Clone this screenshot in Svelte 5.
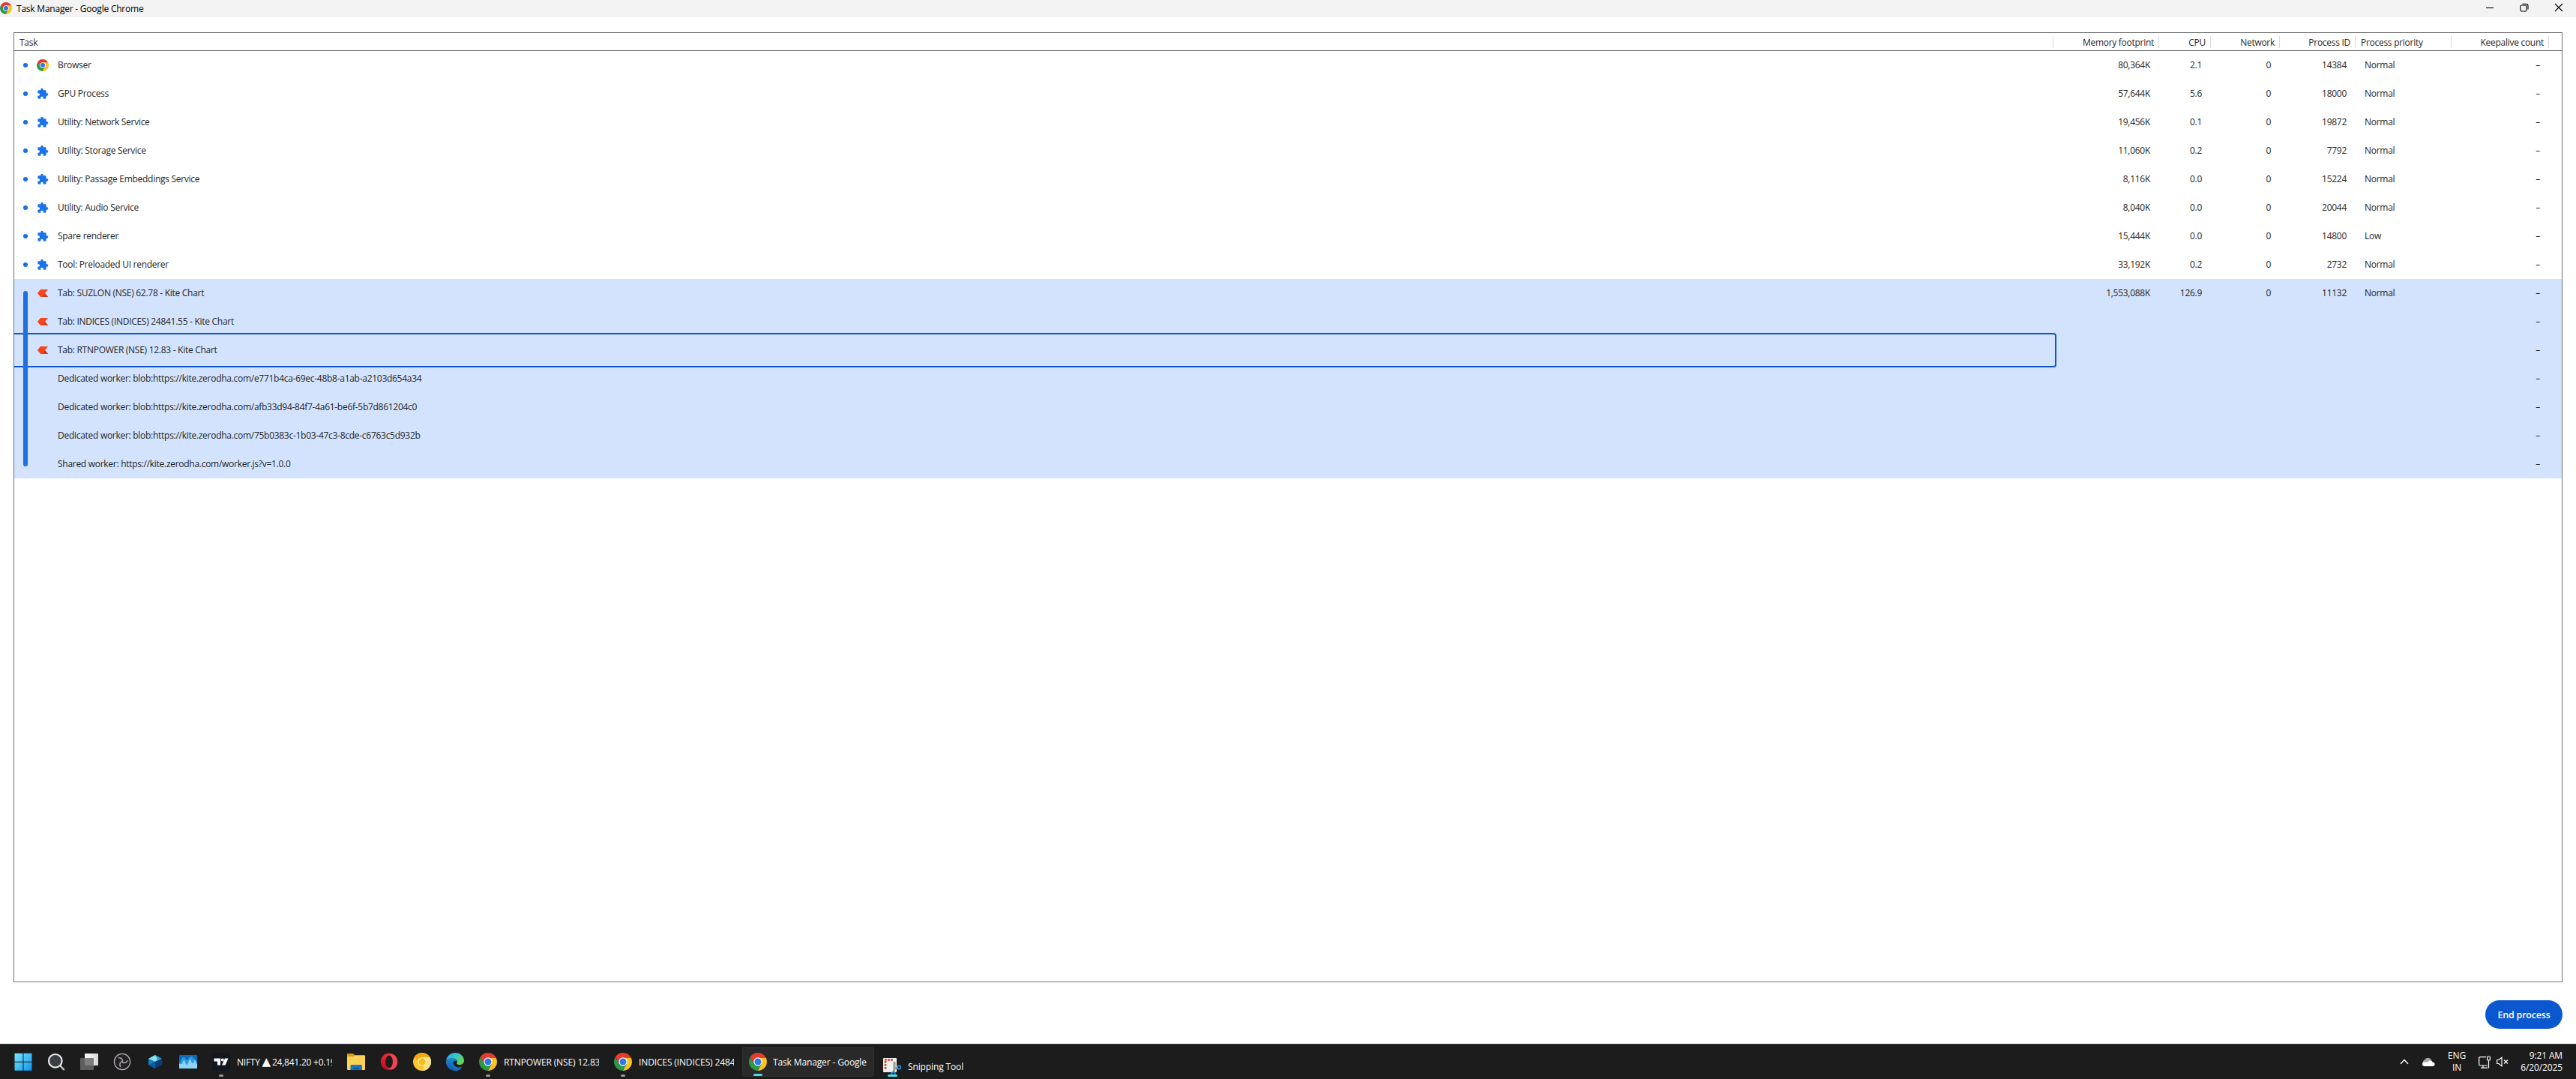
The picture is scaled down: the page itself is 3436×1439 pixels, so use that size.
<script lang="ts">
  type Row = { icon: string; name: string; mem?: string; cpu?: string; net?: string; pid?: string; pri?: string; focused?: boolean };
  const procs: Row[] = [
    { icon: 'chrome', name: 'Browser', mem: '80,364K', cpu: '2.1', net: '0', pid: '14384', pri: 'Normal' },
    { icon: 'ext', name: 'GPU Process', mem: '57,644K', cpu: '5.6', net: '0', pid: '18000', pri: 'Normal' },
    { icon: 'ext', name: 'Utility: Network Service', mem: '19,456K', cpu: '0.1', net: '0', pid: '19872', pri: 'Normal' },
    { icon: 'ext', name: 'Utility: Storage Service', mem: '11,060K', cpu: '0.2', net: '0', pid: '7792', pri: 'Normal' },
    { icon: 'ext', name: 'Utility: Passage Embeddings Service', mem: '8,116K', cpu: '0.0', net: '0', pid: '15224', pri: 'Normal' },
    { icon: 'ext', name: 'Utility: Audio Service', mem: '8,040K', cpu: '0.0', net: '0', pid: '20044', pri: 'Normal' },
    { icon: 'ext', name: 'Spare renderer', mem: '15,444K', cpu: '0.0', net: '0', pid: '14800', pri: 'Low' },
    { icon: 'ext', name: 'Tool: Preloaded UI renderer', mem: '33,192K', cpu: '0.2', net: '0', pid: '2732', pri: 'Normal' },
  ];
  const group: Row[] = [
    { icon: 'kite', name: 'Tab: SUZLON (NSE) 62.78 - Kite Chart', mem: '1,553,088K', cpu: '126.9', net: '0', pid: '11132', pri: 'Normal' },
    { icon: 'kite', name: 'Tab: INDICES (INDICES) 24841.55 - Kite Chart' },
    { icon: 'kite', name: 'Tab: RTNPOWER (NSE) 12.83 - Kite Chart', focused: true },
    { icon: '', name: 'Dedicated worker: blob:https://kite.zerodha.com/e771b4ca-69ec-48b8-a1ab-a2103d654a34' },
    { icon: '', name: 'Dedicated worker: blob:https://kite.zerodha.com/afb33d94-84f7-4a61-be6f-5b7d861204c0' },
    { icon: '', name: 'Dedicated worker: blob:https://kite.zerodha.com/75b0383c-1b03-47c3-8cde-c6763c5d932b' },
    { icon: '', name: 'Shared worker: https://kite.zerodha.com/worker.js?v=1.0.0' },
  ];
</script>

{#snippet chrome()}
  <svg class="fill" viewBox="0 0 48 48">
    <path fill="#fcc31e" d="M24 24 24 13H45.3A24 24 0 0 1 23.5 48L33.6 30z" />
    <path fill="#e33b2e" d="M3.2 12A24 24 0 0 1 45.3 13H24L13.8 30z" />
    <path fill="#2a9a48" d="M3.2 12 14 30 24 35 33.6 30 23.5 48A24 24 0 0 1 3.2 12z" />
    <circle cx="24" cy="24" r="11.5" fill="#fff" />
    <circle cx="24" cy="24" r="9" fill="#3078e8" />
  </svg>
{/snippet}

{#snippet cells(r: Row)}
  <div class="task">
    <div class="ic">
      {#if r.icon === 'chrome'}{@render chrome()}
      {:else if r.icon === 'ext'}
        <svg class="fill" viewBox="0 0 24 24"><path fill="#1a73e8" d="M20.5 11H19V7a2 2 0 0 0-2-2h-4V3.500a2.500 2.500 0 0 0-5 0V5H4a2 2 0 0 0-1.990 2v3.800H3.500a2.700 2.700 0 0 1 0 5.400H2V20a2 2 0 0 0 2 2h3.800v-1.500a2.700 2.700 0 0 1 5.400 0V22H17a2 2 0 0 0 2-2v-4h1.500a2.500 2.500 0 0 0 0-5z" /></svg>
      {:else if r.icon === 'kite'}
        <svg class="fill" viewBox="0 0 16 16"><path fill="#f6461a" d="M5 3H15L11 8 15 13H5L1 8z" /><path fill="#d23b2a" d="M11 8 15 13H7.500z" /></svg>
      {/if}
    </div>
    <span>{r.name}</span>
    {#if r.focused}<div class="focus"></div>{/if}
  </div>
  <div class="num">{r.mem ?? ''}</div>
  <div class="num">{r.cpu ?? ''}</div>
  <div class="num">{r.net ?? ''}</div>
  <div class="num">{r.pid ?? ''}</div>
  <div class="pri">{r.pri ?? ''}</div>
  <div class="num dash">–</div>
{/snippet}

<div class="screen">
  <header class="titlebar">
    <div class="logo">{@render chrome()}</div>
    <h1>Task Manager - Google Chrome</h1>
    <div class="controls">
      <svg viewBox="0 0 12 12"><path d="M1 6.500H11" /></svg>
      <svg viewBox="0 0 12 12"><rect x="1" y="3" width="8" height="8" rx="1.500" /><path d="M3.500 1.200H8.500A2.500 2.500 0 0 1 11 3.700V8.500" /></svg>
      <svg viewBox="0 0 12 12"><path d="M1 1 11 11M11 1 1 11" /></svg>
    </div>
  </header>

  <main>
    <section class="table">
      <div class="grid head">
        <div class="h first">Task</div>
        <div class="h">Memory footprint</div>
        <div class="h">CPU</div>
        <div class="h">Network</div>
        <div class="h">Process ID</div>
        <div class="h left">Process priority</div>
        <div class="h">Keepalive count</div>
      </div>
      {#each procs as r}
        <div class="grid row dot">{@render cells(r)}</div>
      {/each}
      <div class="group">
        {#each group as r}
          <div class="grid row">{@render cells(r)}</div>
        {/each}
        <div class="bar"></div>
      </div>
    </section>
    <div class="actions"><button>End process</button></div>
  </main>

  <footer class="taskbar">
    <div class="apps">
      <div class="app">
        <svg viewBox="0 0 24 24"><defs><linearGradient id="win" x1="0" y1="0" x2="1" y2="1"><stop offset="0" stop-color="#7be6fb" /><stop offset="1" stop-color="#0c96ee" /></linearGradient></defs><path fill="url(#win)" d="M.5 1.500A.8.8 0 0 1 1.300.7H11.500V11.700H.5zM12.500.7H22.700A.8.8 0 0 1 23.500 1.500V11.700H12.500zM.5 12.700H11.500V23.700H1.300A.8.8 0 0 1 .5 22.900zM12.500 12.700H23.500V22.900A.8.8 0 0 1 22.700 23.700H12.500z" /></svg>
      </div>
      <div class="app">
        <svg viewBox="0 0 24 24"><path d="M17 17 22 22.300" stroke="#c9c9c9" stroke-width="2.400" stroke-linecap="round" /><circle cx="10.800" cy="10.800" r="8.800" fill="#3a3f42" stroke="#e9e9e9" stroke-width="2.200" /></svg>
      </div>
      <div class="app">
        <svg viewBox="0 0 24 24"><defs><linearGradient id="tv"><stop stop-color="#fff" /><stop offset="1" stop-color="#d8d8d8" /></linearGradient></defs><rect x="6" y="1" width="18" height="16" rx=".8" fill="url(#tv)" /><rect x="0" y="7" width="18" height="16" rx=".8" fill="#6a6a6a" fill-opacity=".85" /></svg>
      </div>
      <div class="app">
        <svg viewBox="0 0 24 24"><circle cx="12" cy="12" r="10.600" fill="#242226" stroke="#b4b4b4" stroke-width="1.200" /><g fill="none" stroke="#a8a8a8" stroke-width="1.500" stroke-linecap="round"><path d="M12.500 11.500C12.500 8.500 10.500 6.500 7.500 6.800" /><path d="M12.500 11.500C12.500 8.500 10.500 6.500 7.500 6.800" transform="rotate(120 12 12)" /><path d="M12.500 11.500C12.500 8.500 10.500 6.500 7.500 6.800" transform="rotate(240 12 12)" /></g></svg>
      </div>
      <div class="app">
        <svg viewBox="0 0 24 24"><path fill="#2fa4dc" d="M12 3 21 8 12 12 3 8z" /><path fill="#8be4f4" d="M12 3 15 9 12 12 3 8z" /><path fill="#1381c8" d="M3 8 12 12V21L3 16z" /><path fill="#0b3c78" d="M21 8 12 12V21L21 16z" /><path fill="#0c5ba4" d="M3 16 12 12 12 21z" /></svg>
      </div>
      <div class="app">
        <svg viewBox="0 0 24 24"><rect y="3" width="24" height="18" rx="1.200" fill="#0f6bb8" /><path fill="#2d9be6" d="M0 13C3 13 3 6 6 6S8 10 10 10 13 5 16 5 18 8 20 8 22 12 24 12V21H0z" /><path fill="#8fd3fb" d="M0 15H3C5 15 5 10 6.500 10S8 16 10 16 13 9 14.500 9 16 14 18 14 20 10 21 10 22 15 24 15V20A1 1 0 0 1 23 21H1A1 1 0 0 1 0 20z" /></svg>
      </div>
    </div>
    <div class="win nifty">
      <div class="wi"><svg class="fill" viewBox="0 0 24 24"><rect width="24" height="24" rx="2" fill="#131722" /><path fill="#fff" d="M2.500 7.500H11V16.500H7V11.500H2.500zM17 7.500H21.500L17.500 16.500H13z" /><circle cx="13.800" cy="9.500" r="2" fill="#fff" /></svg></div>
      <span>NIFTY <b>▲</b> 24,841.20 +0.19</span>
    </div>
    <div class="apps mid">
      <div class="app">
        <svg viewBox="0 0 24 24"><path fill="#d89a14" d="M0 2A1 1 0 0 1 1 1H8L10.500 3.500V8H0z" /><path fill="#fdd155" d="M0 5H8.500L10.500 3.200H23A1 1 0 0 1 24 4.200V22A1 1 0 0 1 23 23H1A1 1 0 0 1 0 22z" /><path fill="#1676c8" d="M4.500 23V17.500A1.500 1.500 0 0 1 6 16H18.500A1.500 1.500 0 0 1 20 17.500V23z" /><rect x="8" y="20" width="8.500" height="2" rx="1" fill="#0d5594" /></svg>
      </div>
      <div class="app">
        <svg viewBox="0 0 24 24"><defs><linearGradient id="op" x1="0" y1="0" x2="0" y2="1"><stop stop-color="#fa2438" /><stop offset="1" stop-color="#b20d20" /></linearGradient></defs><circle cx="12" cy="12" r="11.300" fill="url(#op)" /><path fill="#ee4650" d="M8 5C12 1 16 1 19 3.200A11.300 11.300 0 0 1 19 20.800C16 23 12 23 8 19C14 21 17 17 17 12S14 3 8 5z" /><ellipse cx="12" cy="12" rx="4.800" ry="8.400" fill="#1c1c1c" /></svg>
      </div>
      <div class="app">
        <svg viewBox="0 0 48 48"><circle cx="24" cy="24" r="24" fill="#fcc62e" /><path fill="#f3a712" d="M3.200 12A24 24 0 0 1 44.800 12H24L14 24z" /><path fill="#ffe086" d="M24 12H44.800A24 24 0 0 1 24 48L35 28z" /><circle cx="24" cy="24" r="12" fill="#fff2c4" /><circle cx="24" cy="24" r="9.300" fill="#fbbc14" /></svg>
      </div>
      <div class="app">
        <svg viewBox="0 0 24 24"><defs><linearGradient id="e1" x1="0" y1="0" x2="1" y2=".5"><stop stop-color="#2aa6e6" /><stop offset=".5" stop-color="#35c3d6" /><stop offset="1" stop-color="#62d84e" /></linearGradient><linearGradient id="e2" x1="0" y1="0" x2="0" y2="1"><stop stop-color="#1b8ad6" /><stop offset="1" stop-color="#0d58ae" /></linearGradient></defs><path fill="url(#e1)" d="M0 11C1 4 6 0 12 0 19 0 24 5 24 10.500 24 14 21 16 18 16 15 16 13.500 15 14.500 13.500 16 11 13 7.500 8 7.500 4 7.500 1 9 0 11z" /><path fill="url(#e2)" d="M0 12C.5 9 4 7 8 7.500 12 8 14 10 14 11 10 9.500 8 13 9.500 16.500 11 20 16 21.500 21.500 18.500 19 22.500 16 24 12 24 5 24-.3 18.500 0 12z" /><path fill="#1470c4" d="M9 12C6 17 9 22.500 13 24 16 24 19.500 22 21.500 18.500 16 21 10 19 9 12z" /></svg>
      </div>
    </div>
    <div class="win chr">
      <div class="wi">{@render chrome()}</div><span>RTNPOWER (NSE) 12.83</span>
    </div>
    <div class="win chr">
      <div class="wi">{@render chrome()}</div><span>INDICES (INDICES) 2484</span>
    </div>
    <div class="win active">
      <div class="wi">{@render chrome()}</div><span>Task Manager - Google</span>
    </div>
    <div class="win snip">
      <div class="wi"><svg class="fill" viewBox="0 0 24 24"><rect width="18" height="19" rx="1" fill="#efefef" /><path d="M2 2.500H13M3 4V15" stroke="#d8431f" stroke-width="2.600" stroke-dasharray="2.800 1.200" fill="none" /><path d="M15 5V14L20 13M15 14 14 19" stroke="#9b9b9b" stroke-width="3" fill="none" /><g fill="none" stroke="#2d8fd6" stroke-width="1.800"><circle cx="21.200" cy="12.500" r="2.200" /><circle cx="13.500" cy="20.800" r="2.200" /></g></svg></div>
      <span>Snipping Tool</span>
    </div>
    <div class="tray">
      <svg class="chev" viewBox="0 0 12 8"><path d="M1 6.800 6 1.500 11 6.800" fill="none" stroke="#fff" stroke-width="1.500" /></svg>
      <svg class="cloud" viewBox="0 0 18 12"><path fill="#a8a8a8" d="M2 9A4 4 0 0 1 4 3.500 5 5 0 0 1 13 3.500L8 9z" /><path fill="#fff" d="M3 12A2.800 2.800 0 0 1 2.500 6.800C5 6 7 7 9 6 11 3.500 14 4 14.500 6.500 17 6.500 17.500 8 17.500 9.300 17.500 11 16.500 12 15 12z" /></svg>
      <div class="lang"><div>ENG</div><div>IN</div></div>
      <svg class="net" viewBox="0 0 16 17"><g fill="none" stroke="#fff" stroke-width="1.200"><path d="M10 1.600H2.200A1.500 1.500 0 0 0 .7 3.100V11.500A1.500 1.500 0 0 0 2.200 13H12M6 13V16M3 16.200H12" /><rect x="11.600" y="1" width="3.700" height="5" rx=".8" /><path d="M13.500 6V16.500" /></g></svg>
      <svg class="vol" viewBox="0 0 16 14"><g fill="none" stroke="#fff" stroke-width="1.200"><path d="M.7 4.500H3L7 1.200V12.800L3 9.500H.7z" /><path d="M10 4.500 15 9.500M15 4.500 10 9.500" /></g></svg>
      <div class="clock"><div>9:21 AM</div><div>6/20/2025</div></div>
    </div>
  </footer>
</div>

<style>
  :global(body) { margin: 0; background: #fff; }
  .screen { width: 3436px; height: 1439px; display: flex; flex-direction: column; overflow: hidden; background: #fff; font: 12px/16px "Open Sans", "Noto Sans", sans-serif; letter-spacing: -0.28px; color: #1f1f1f; }
  .fill { width: 100%; height: 100%; display: block; }
  .titlebar { height: 23px; background: #f3f3f3; display: flex; align-items: center; color: #000; }
  .logo { width: 16px; height: 16px; margin: 0 6px 1px 0; }
  h1 { font: inherit; letter-spacing: -0.22px; margin: 0; flex: 1; padding-top: 1px; }
  .controls { display: flex; gap: 34px; padding: 0 17px 3px 0; }
  .controls svg { width: 12px; height: 12px; fill: none; stroke: #000; stroke-width: 1.100; }
  main { flex: 1; display: flex; flex-direction: column; padding: 20px 18px; }
  .table { height: 1265px; border: 1px solid #6e6e6e; overflow: hidden; }
  .grid { display: grid; grid-template-columns: 2720px 141px 69px 92px 101px 128px 130px; }
  .head { height: 23px; border-bottom: 1px solid #6e6e6e; align-items: center; }
  .h { height: 16px; margin-top: 1px; line-height: 17px; padding-right: 6px; border-right: 1px solid #dadce0; text-align: right; white-space: nowrap; }
  .h.first, .h.left { text-align: left; padding-left: 7px; }
  .row { height: 38px; line-height: 38px; position: relative; }
  .row .num { text-align: right; padding-right: 12px; }
  .row .pri { padding-left: 12px; }
  .task { position: relative; display: flex; align-items: center; padding-left: 30px; white-space: nowrap; }
  .ic { width: 16px; height: 16px; margin-right: 12px; }
  .dot::before { content: ""; position: absolute; left: 12px; top: 16px; width: 6px; height: 6px; border-radius: 50%; background: #1a6fe0; }
  .group { background: #d3e3fd; position: relative; }
  .bar { position: absolute; left: 12px; top: 16px; bottom: 16px; width: 6px; border-radius: 3px; background: #1f70e2; }
  .focus { position: absolute; left: -6px; right: -4px; top: -4px; bottom: -4px; box-sizing: border-box; border: 2px solid #0f56c8; border-radius: 4px; }
  .actions { display: flex; justify-content: flex-end; padding-top: 24px; }
  button { width: 103px; height: 38px; border: 0; border-radius: 19px; background: #0b57d0; color: #fff; font: 600 12.500px "Open Sans", sans-serif; letter-spacing: -0.2px; padding: 0; }
  .taskbar { height: 46px; border-top: 1px solid #3b3b3b; background: #1c1c1c; color: #fff; display: flex; letter-spacing: -0.13px; }
  .apps { display: flex; align-items: center; gap: 20px; padding: 0 0 0 19px; }
  .app { width: 24px; height: 24px; }
  .app svg { display: block; width: 24px; height: 24px; }
  .mid { padding-left: 20px; }
  .win { position: relative; display: flex; align-items: center; box-sizing: border-box; white-space: nowrap; }
  .win span { overflow: hidden; line-height: 20px; padding-top: 2px; }
  .win b { font: 15px/12px "DejaVu Sans", sans-serif; letter-spacing: -1px; }
  .wi { width: 24px; height: 24px; margin: 0 9px 0 0; flex: none; }
  .win::after { content: ""; position: absolute; left: 9px; bottom: 3px; width: 6px; height: 3px; border-radius: 2px; background: #9a9a9a; }
  .nifty { margin-left: 20px; width: 160px; letter-spacing: -0.24px; }
  .chr { margin-left: 20px; width: 160px; }
  .active { width: 176px; margin: 3px 0 3px 11px; padding-left: 9px; background: #292929; border-radius: 4px; box-shadow: inset 0 0 0 1px #303030; }
  .active .wi { margin-right: 8px; }
  .active::after { left: 15px; bottom: 1px; width: 12px; background: #4cc2e8; }
  .active::after, .snip::after { background: #4cd8ee; }
  .snip { margin-left: 12px; padding-top: 12px; }
  .snip .wi { margin-top: 2px; }
  .snip::after { left: 6px; width: 13px; }
  .tray { margin-left: auto; display: flex; align-items: center; padding-right: 18px; }
  .chev { width: 12px; height: 8px; margin-right: 17px; }
  .cloud { width: 18px; height: 12px; margin-right: 16px; }
  .lang { width: 26px; text-align: center; margin-right: 16px; }
  .net { width: 16px; height: 17px; margin-right: 8px; }
  .vol { width: 16px; height: 14px; margin-right: 16px; }
  .clock { text-align: right; width: 56px; }
</style>
